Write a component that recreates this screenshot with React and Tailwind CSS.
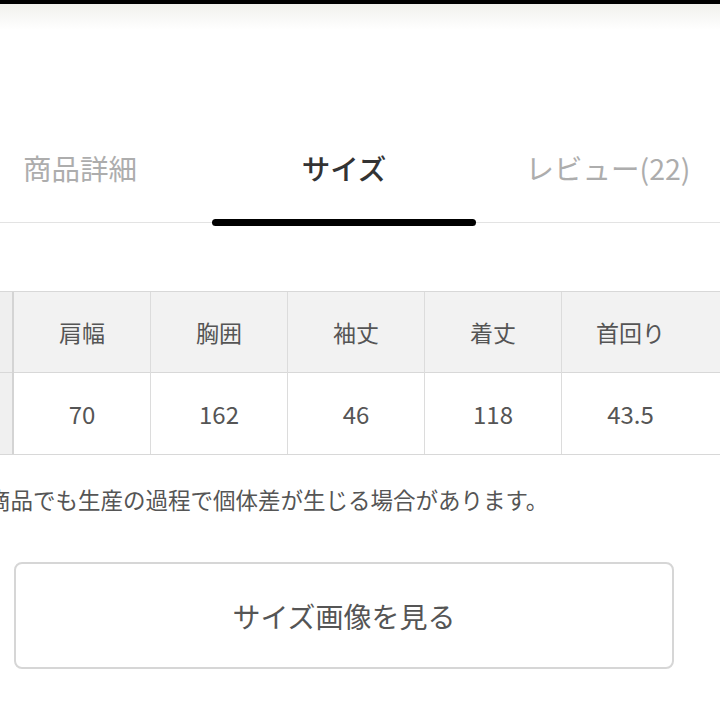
export default function App() {
  const tabs = [
    { label: "商品詳細", active: false },
    { label: "サイズ", active: true },
    { label: "レビュー(22)", active: false },
  ];
  const cols = [
    { head: "肩幅", value: "70" },
    { head: "胸囲", value: "162" },
    { head: "袖丈", value: "46" },
    { head: "着丈", value: "118" },
    { head: "首回り", value: "43.5" },
  ];

  return (
    <div
      className="w-[720px] h-[720px] overflow-hidden bg-white"
      style={{ fontFamily: '"Noto Sans CJK JP", "Noto Sans", sans-serif' }}
    >
      {/* status bar edge + fade */}
      <div className="h-[4px] bg-black" />
      <div className="h-[26px] bg-gradient-to-b from-[#f1f1ed] to-white" />

      {/* tabs */}
      <div className="relative border-b border-[#e3e3e3]">
        <div className="flex -ml-[52px] w-[792px]">
          {tabs.map((t) => (
            <div key={t.label} className="relative w-[264px] flex flex-col items-center">
              <div
                className={
                  "pt-[118px] pb-[34px] text-[28.5px] leading-[40px] " +
                  (t.active ? "text-[#333] font-medium" : "text-[#adadad]")
                }
              >
                {t.label}
              </div>
              {t.active && (
                <div className="absolute left-0 right-0 -bottom-[4px] h-[7px] rounded-full bg-black" />
              )}
            </div>
          ))}
        </div>
      </div>

      {/* size table */}
      <div className="mt-[68px] -ml-[124px] flex border-t border-b border-[#d8d8d8]">
        <div className="w-[138px] shrink-0 flex flex-col border-r-2 border-[#d4d4d4]">
          <div className="h-[81px] bg-[#efefef] border-b border-[#d8d8d8]" />
          <div className="h-[81px] bg-[#f0f0f0]" />
        </div>
        {cols.map((c, i) => (
          <div
            key={i}
            className={
              "shrink-0 flex flex-col " +
              (i === cols.length - 1 ? "w-[137px]" : "w-[137px] border-r border-[#dcdcdc]")
            }
          >
            <div className="h-[81px] bg-[#f2f2f2] border-b border-[#d8d8d8] flex items-center justify-center text-[23px] text-[#555]">
              {c.head}
            </div>
            <div className="h-[81px] bg-white flex items-center justify-center text-[24px] text-[#555]">
              {c.value}
            </div>
          </div>
        ))}
        <div className="w-[200px] shrink-0 flex flex-col">
          <div className="h-[81px] bg-[#f2f2f2] border-b border-[#d8d8d8]" />
          <div className="h-[81px] bg-white" />
        </div>
      </div>

      {/* note */}
      <div className="mt-[29px] -ml-[12px] whitespace-nowrap text-[22.5px] leading-[30px] text-[#555]">
        商品でも生産の過程で個体差が生じる場合があります。
      </div>

      {/* button */}
      <div className="mt-[48px] ml-[14px] w-[660px] h-[107px] rounded-[8px] border-2 border-[#d6d6d6] flex items-center justify-center text-[28px] text-[#555]">
        サイズ画像を見る
      </div>
    </div>
  );
}
